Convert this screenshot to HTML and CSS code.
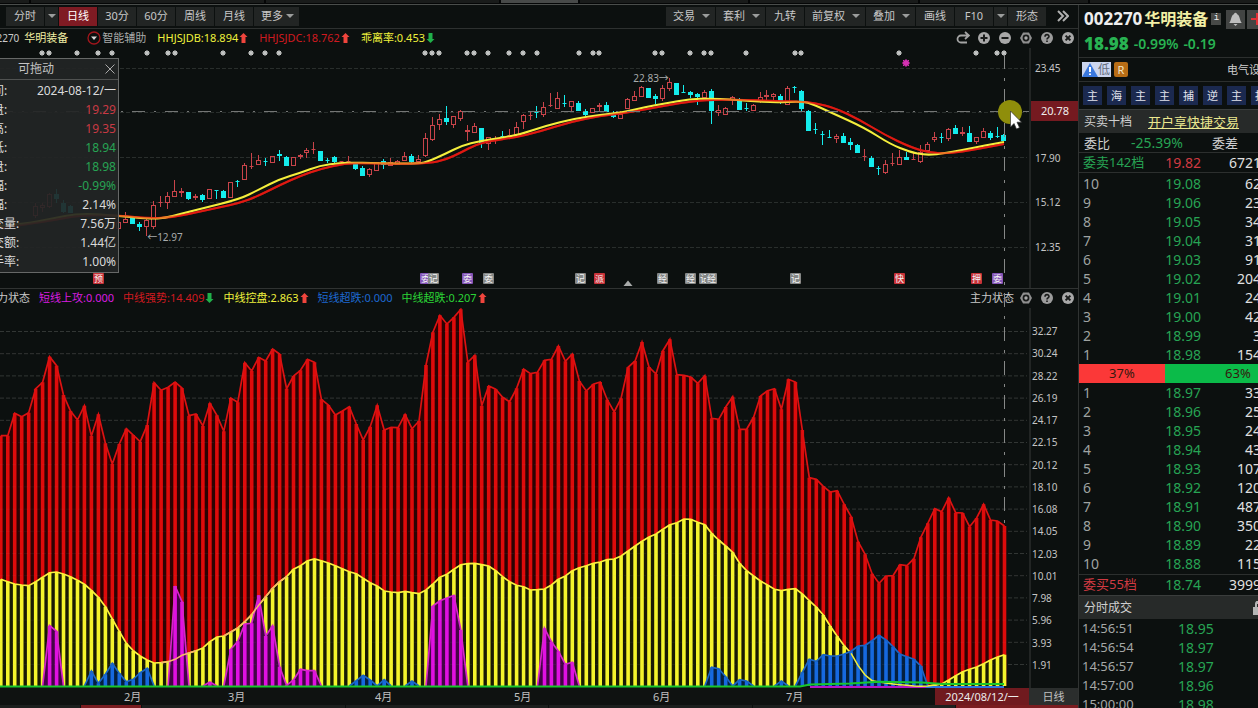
FILE: index.html
```html
<!DOCTYPE html>
<html lang="zh-CN">
<head>
<meta charset="utf-8">
<title>华明装备 002270 日线</title>
<link rel="stylesheet" href="styles.css">
</head>
<body>
<svg class="defs" width="0" height="0" aria-hidden="true">
  <symbol id="up" viewBox="0 0 8 10"><path d="M4 0 8 4H6V10H2V4H0Z"/></symbol>
  <symbol id="down" viewBox="0 0 8 10"><path d="M4 10 8 6H6V0H2V6H0Z"/></symbol>
  <symbol id="redo" viewBox="0 0 14 14"><path d="M9 1 13 4.500 9 8M12 4.500H5A3.200 3.200 0 0 0 5 11.500H11" fill="none" stroke="#a4a4a4" stroke-width="1.800"/></symbol>
  <symbol id="plus" viewBox="0 0 14 14"><circle cx="7" cy="7" r="6" fill="#a8a8a8"/><path d="M3.500 7H10.500M7 3.500V10.500" stroke="#181a19" stroke-width="2"/></symbol>
  <symbol id="minus" viewBox="0 0 14 14"><circle cx="7" cy="7" r="6" fill="#a8a8a8"/><path d="M3.500 7H10.500" stroke="#181a19" stroke-width="2"/></symbol>
  <symbol id="gear" viewBox="0 0 14 14"><path d="M4 1.500H10L13 7 10 12.500H4L1 7Z" fill="#8f8f8f"/><circle cx="7" cy="7" r="3.400" fill="#181a19"/><circle cx="7" cy="7" r="1.700" fill="#a8a8a8"/></symbol>
  <symbol id="help" viewBox="0 0 14 14"><circle cx="7" cy="7" r="6" fill="#9c9c9c"/><path d="M5 5.700C5 3 9 3 9 5.500 9 7 7 6.800 7 8.600M7 9.600V11" fill="none" stroke="#181a19" stroke-width="1.600"/></symbol>
  <symbol id="close" viewBox="0 0 14 14"><circle cx="7" cy="7" r="6" fill="#a8a8a8"/><path d="M4.600 4.600 9.400 9.400M9.400 4.600 4.600 9.400" stroke="#181a19" stroke-width="2"/></symbol>
</svg>
<div class="app">
  <div class="tabstrip"><i></i><i></i><i></i><i class="on"></i><i></i><i></i><i></i><i></i></div>
  <div class="body">
    <main class="main">
      <nav class="toolbar">
        <div class="group">
          <button class="btn">分时</button><button class="btn drop" aria-label="分时选项"><span class="caret"></span></button>
          <button class="btn active">日线</button><button class="btn">30分</button><button class="btn">60分</button><button class="btn">周线</button><button class="btn">月线</button><button class="btn more">更多<span class="caret"></span></button>
        </div>
        <div class="group">
          <button class="btn wide">交易<span class="caret"></span></button><button class="btn wide">套利<span class="caret"></span></button><button class="btn">九转</button><button class="btn wide">前复权<span class="caret"></span></button><button class="btn wide">叠加<span class="caret"></span></button><button class="btn">画线</button><button class="btn">F10</button><button class="btn drop" aria-label="F10选项"><span class="caret"></span></button><button class="btn">形态</button>
          <button class="expand" aria-label="展开"><svg width="12" height="12" viewBox="0 0 12 12"><path d="M1 1 6 6 1 11M6 1 11 6 6 11" fill="none" stroke="#b0b0b0" stroke-width="2"/></svg></button>
        </div>
      </nav>
      <div class="charts">
        <div class="legend first">
          <div class="items">
            <span class="stock"><span class="code">002270</span><span class="pale">华明装备</span></span>
            <span class="assist"><svg width="14" height="14" viewBox="0 0 14 14"><circle cx="7" cy="7" r="6" fill="none" stroke="#a3161c" stroke-width="1.300"/><path d="M4 5.500H10L7 9Z" fill="#d8d8d8"/></svg>智能辅助</span>
            <span class="yellow">HHJSJDB:18.894<svg class="arrow up"><use href="#up"/></svg></span>
            <span class="red">HHJSJDC:18.762<svg class="arrow up"><use href="#up"/></svg></span>
            <span class="yellow">乖离率:0.453<svg class="arrow down"><use href="#down"/></svg></span>
          </div>
          <div class="tools">
            <button aria-label="恢复"><svg><use href="#redo"/></svg></button><button aria-label="放大"><svg><use href="#plus"/></svg></button><button aria-label="缩小"><svg><use href="#minus"/></svg></button><button aria-label="设置"><svg><use href="#gear"/></svg></button><button aria-label="帮助"><svg><use href="#help"/></svg></button><button aria-label="关闭"><svg><use href="#close"/></svg></button>
          </div>
        </div>
        <section class="pane price">
          <div class="plot"><svg id="price" viewBox="0 48 1029 240" preserveAspectRatio="none"></svg>
            <div id="marks"></div>
            <span class="note high">22.83→</span><span class="note low">←12.97</span>
          </div>
          <div class="axis"><span>23.45</span><span class="current">20.78</span><span>17.90</span><span>15.12</span><span>12.35</span></div>
        </section>
        <div class="legend second">
          <div class="items">
            <span>主力状态</span>
            <span class="magenta">短线上攻:0.000</span>
            <span class="red">中线强势:14.409<svg class="arrow down"><use href="#down"/></svg></span>
            <span class="yellow">中线控盘:2.863<svg class="arrow up"><use href="#up"/></svg></span>
            <span class="blue">短线超跌:0.000</span>
            <span class="green">中线超跌:0.207<svg class="arrow up"><use href="#up"/></svg></span>
          </div>
          <div class="tools"><span>主力状态</span>
            <button aria-label="设置"><svg><use href="#gear"/></svg></button><button aria-label="帮助"><svg><use href="#help"/></svg></button><button aria-label="关闭"><svg><use href="#close"/></svg></button>
          </div>
        </div>
        <section class="pane force">
          <div class="plot"><svg id="force" viewBox="0 308 1029 380" preserveAspectRatio="none"></svg></div>
          <div class="axis"><span>32.27</span><span>30.24</span><span>28.22</span><span>26.19</span><span>24.17</span><span>22.15</span><span>20.12</span><span>18.10</span><span>16.08</span><span>14.05</span><span>12.03</span><span>10.01</span><span>7.98</span><span>5.96</span><span>3.93</span><span>1.91</span></div>
        </section>
        <div class="hair-v"></div><div class="hair-h"></div>
        <div class="pointer"><svg width="32" height="36" viewBox="0 0 32 36"><circle cx="12" cy="13" r="12" fill="#8f8e0b"/><path d="M12.500 12V28L16 24.500 18.500 30 21.500 28.600 19 23.200H23.500Z" fill="#fff" stroke="#333" stroke-width=".7"/></svg></div>
        <div class="tip">
          <div class="tip-head"><span>可拖动</span><button aria-label="关闭"><svg width="10" height="10" viewBox="0 0 10 10"><path d="M.5.5 9.500 9.500M9.500.5.5 9.500" stroke="#aaa" fill="none"/></svg></button></div>
          <dl>
            <dt>时间:</dt><dd>2024-08-12/一</dd>
            <dt>开盘:</dt><dd class="rise">19.29</dd>
            <dt>最高:</dt><dd class="rise">19.35</dd>
            <dt>最低:</dt><dd class="fall">18.94</dd>
            <dt>收盘:</dt><dd class="fall">18.98</dd>
            <dt>涨幅:</dt><dd class="fall">-0.99%</dd>
            <dt>振幅:</dt><dd>2.14%</dd>
            <dt>成交量:</dt><dd>7.56万</dd>
            <dt>成交额:</dt><dd>1.44亿</dd>
            <dt>换手率:</dt><dd>1.00%</dd>
          </dl>
        </div>
      </div>
      <div class="dates">
        <div class="months" id="months"></div>
        <span class="period">日线</span>
      </div>
      <div class="ticker"><i></i><i class="hot"></i><i></i><i></i><i></i><i></i><i class="hot"></i></div>
    </main>
    <aside class="quote"><div class="sheet">
      <h1><span>002270</span><span class="pale">华明装备</span><small>i</small>
        <button aria-label="提醒"><svg width="15" height="15" viewBox="0 0 15 15"><path d="M7.500.8C9 .8 8.600 2 9.500 2.500 12 3.700 11.600 8.500 13.800 11H1.200C3.400 8.500 3 3.700 5.500 2.500 6.400 2 6 .8 7.500.8ZM5.500 12H9.500L7.500 14Z" fill="#bdbdbd"/></svg></button><button class="add" aria-label="加自选"><svg width="12" height="12" viewBox="0 0 12 12"><path d="M0 6H12M6 0V12" stroke="#e02f35" stroke-width="2"/></svg></button></h1>
      <p class="last"><b>18.98</b><span>-0.99%</span><span>-0.19</span></p>
      <div class="badges"><span class="low"><svg width="16" height="14" viewBox="0 0 16 14"><path d="M8 0 16 14H0Z" fill="#3a78dd"/><path d="M8 4V9M8 10.500V12" stroke="#fff" stroke-width="2"/></svg>低</span><span class="r">R</span><span class="sector">电气设备</span></div>
      <div class="chips"><button>主</button><button>海</button><button>主</button><button>主</button><button>捕</button><button>逆</button><button>主</button><button>捕</button></div>
      <div class="bar"><span>买卖十档</span><a href="#">开户享快捷交易</a></div>
      <div class="ratio"><span>委比</span><b>-25.39%</b><span>委差</span></div>
      <table class="book total"><tr><th class="fall">委卖142档</th><td class="rise">19.82</td><td>6721</td></tr></table>
      <table class="book" id="asks"></table>
      <div class="balance"><span>37%</span><span>63%</span></div>
      <table class="book" id="bids"></table>
      <table class="book total buy"><tr><th class="rise">委买55档</th><td>18.74</td><td>3999</td></tr></table>
      <div class="bar deals"><span>分时成交</span><svg width="12" height="14" viewBox="0 0 12 14"><path d="M0 6H12V14H0ZM2 6V3A3 3 0 0 1 9 3V6H7V3H4V6Z" fill="#b5b5b5"/></svg></div>
      <table class="trades" id="trades"></table>
    </div></aside>
  </div>
</div>
<script src="chart.js"></script>
</body>
</html>
```
FILE: styles.css
```css
* { box-sizing: border-box; margin: 0; padding: 0; }
body { background: #0c100f; color: #c9c9c9; font: 11px/14px "Noto Sans", "Noto Sans CJK SC", sans-serif; overflow: hidden; }
button { border: 0; background: none; color: inherit; font: inherit; display: flex; align-items: center; justify-content: center; }
.defs { position: absolute; }
.app { height: 100vh; display: flex; flex-direction: column; }
.tabstrip { height: 5px; display: flex; gap: 2px; border-bottom: 1px solid #4a4d4b; flex: none; padding-bottom: 1px; background: #050606; margin-left: -51px; }
.tabstrip i { flex: 0 0 77px; background: #191b1a; }
.tabstrip i:first-child { flex-basis: 80px; }
.tabstrip i:nth-child(2), .tabstrip i:nth-child(3) { flex-basis: 233px; }
.tabstrip i:nth-child(n+5) { flex: 1; }
.tabstrip .on { background: #484a49; }
.body { flex: 1; display: flex; min-height: 0; }
.main { flex: 1; min-width: 0; display: flex; flex-direction: column; }

.toolbar { height: 24px; flex: none; display: flex; justify-content: space-between; align-items: center; padding: 0 0 1px 6px; border-bottom: 1px solid #2e3130; }
.group { display: flex; gap: 1px; align-items: center; }
.btn { min-width: 38px; height: 19px; background: #222524; color: #c8c8c8; padding: 0 7px; gap: 5px; white-space: nowrap; }
.btn.drop { min-width: 13px; width: 13px; padding: 0; }
.btn.wide { padding: 0 5px 0 7px; gap: 7px; }
.btn.more { gap: 3px; padding: 0 5px 0 7px; }
.btn.active { background: #7f1b23; color: #fff; }
.caret { border: 4px solid transparent; border-top-color: #9b9d9c; border-bottom: 0; }
.expand { width: 31px; height: 19px; }

.charts { flex: 1; min-height: 0; display: flex; flex-direction: column; position: relative; overflow: hidden; }
.legend { height: 19px; flex: none; display: flex; justify-content: space-between; align-items: center; white-space: nowrap; padding-bottom: 2px; }
.legend .items { display: flex; align-items: center; gap: 11px; }
.first .items { margin-left: -15px; }
.second .items { margin-left: -14px; gap: 9px; }
.second { height: 20px; border-top: 1px solid #303332; }
.legend .items > span { display: flex; align-items: center; }
.legend .stock { gap: 5px; margin-right: 8px; }
.code { font-size: 10px; }
.assist { color: #a9abaa; gap: 1px; }
.arrow { width: 9px; height: 10px; margin-left: 1px; }
.arrow.up { fill: #f0453d; }
.arrow.down { fill: #20b04a; }
.tools { display: flex; gap: 7px; padding-right: 3px; align-items: center; }
.tools svg { width: 14px; height: 14px; display: block; }
.tools span { margin-right: -2px; }
.pale { color: #f2efa5; }
.yellow { color: #eff03c; }
.red { color: #d01a20; }
.magenta { color: #d81ce0; }
.blue { color: #1d68cf; }
.green { color: #2bd436; }
.rise { color: #c93a44; }
.fall { color: #27a454; }

.pane { display: flex; min-height: 0; }
.pane.price { flex: 240 1 0; }
.pane.force { flex: 380 1 0; }
.plot { flex: 1; min-width: 0; position: relative; }
.plot > svg { display: block; width: 100%; height: 100%; position: absolute; }
.axis { width: 49px; border-left: 2px solid #222524; display: flex; flex-direction: column; justify-content: space-between; font-size: 10px; color: #c4c4c4; }
.price .axis { padding: 13px 0 34px; }
.price .axis span { padding-left: 4px; }
.price .axis .current { background: #751a20; color: #eee; font-size: 11px; line-height: 20px; margin: -5px 0 -1px; padding-left: 10px; }
.force .axis { padding: 16px 0 16px 1px; }
.note { position: absolute; font-size: 10px; color: #a8abab; white-space: nowrap; }
.note.high { right: 35%; top: 9.600%; }
.note.low { left: 14.300%; top: 76%; }
.mark { position: absolute; top: 93.600%; width: 11px; margin: 0 -5px; font-size: 9px; line-height: 11px; text-align: center; color: #f4f4f4; background: #858786; border-radius: 1px; }
.mark.hot { background: #c83238; }
.mark.violet { background: #8455b8; }

.hair-v { position: absolute; top: 26px; bottom: 163px; left: calc((100% - 49px) * .976); width: 1px; background: repeating-linear-gradient(#868887 0 14px, transparent 14px 23px, #868887 23px 26px, transparent 26px 34px); }
.hair-h { position: absolute; top: 82px; left: 0; right: 49px; height: 1px; background: repeating-linear-gradient(90deg, #747675 0 13px, transparent 13px 22px, #747675 22px 24px, transparent 24px 33px); }
.pointer { position: absolute; top: 70px; left: calc((100% - 49px) * .970); }

.tip { position: absolute; left: -26px; top: 29px; width: 145px; height: 215px; background: rgba(35, 37, 37, .92); border: 1px solid #666867; font-size: 12px; }
.tip-head { height: 21px; border-bottom: 1px solid #505251; display: flex; justify-content: space-between; align-items: center; padding: 0 3px 0 43px; color: #c4c4c4; }
.tip dl { display: grid; grid-template-columns: 46px 1fr; grid-auto-rows: 19px; line-height: 19px; padding: 1px 2px 0 5px; color: #dadada; }
.tip dd { text-align: right; }

.dates { height: 17px; flex: none; display: flex; background: #0f1211; color: #c0c0c0; line-height: 17px; }
.months { flex: 1; position: relative; }
.months span { position: absolute; margin-left: -8px; }
.months .today { right: 0; background: #701a1f; width: 94px; text-align: center; margin: 0; color: #ececec; white-space: nowrap; }
.period { width: 49px; background: #2b2e2d; text-align: center; }
.ticker { height: 3px; display: flex; flex: none; gap: 1px; }
.ticker i { flex: 0 0 80px; background: #1c1f1e; }
.ticker i:nth-child(n+3) { flex: 1; }
.ticker i:nth-child(2) { flex-basis: 60px; }
.ticker i:last-child { flex: 0 0 122px; }
.ticker .hot { background: #7a1c20; }

.quote { width: 180px; flex: none; overflow: hidden; border-left: 1px solid #303332; color: #cfcfcf; }
.sheet { width: 232px; }
.quote h1 { height: 28px; display: flex; align-items: center; font-size: 17px; color: #eee; padding: 0 0 0 5px; }
.quote h1 .pale { font-size: 16px; font-weight: 600; margin-left: 2px; }
.quote h1 small { font: 9px/11px "Liberation Mono", monospace; background: #474947; width: 10px; height: 12px; margin: 0 5px 0 3px; text-align: center; }
.quote h1 button { width: 19px; height: 19px; background: #424443; margin-right: 2px; }
.last { height: 25px; display: flex; align-items: center; gap: 5px; padding: 0 0 3px 5px; color: #28b352; font-size: 14px; font-weight: 600; border-bottom: 1px solid #2c2f2e; }
.last b { font-size: 17px; }
.badges { height: 24px; display: flex; align-items: center; padding-left: 3px; border-bottom: 1px solid #2c2f2e; }
.badges .low { width: 29px; height: 15px; background: #cbd5ee; color: #666d7c; display: flex; align-items: center; font-size: 12px; margin-right: 3px; }
.badges .low svg { flex: none; }
.badges .r { width: 14px; height: 15px; line-height: 15px; background: #b86d16; color: #f3e5c4; text-align: center; border-radius: 2px; }
.sector { margin-left: 99px; white-space: nowrap; }
.chips { height: 27px; display: flex; align-items: center; gap: 5px; padding-left: 4px; }
.chips button { width: 19px; height: 19px; flex: none; background: #1b294f; color: #e1e3ec; }
.bar { height: 24px; background: #272a29; display: flex; align-items: center; gap: 16px; font-size: 12px; padding-left: 5px; border-top: 1px solid #3a3d3c; }
.bar a { color: #ebe88f; font-size: 13px; }
.ratio { height: 20px; display: grid; grid-template-columns: 47px 81px 1fr; align-items: center; padding-left: 5px; font-size: 13px; border-bottom: 1px solid #2c2f2e; }
.ratio b { font-weight: 400; font-size: 14px; color: #27a454; }
table { border-spacing: 0; table-layout: fixed; }
.book { width: 182px; font-size: 14px; line-height: 19px; }
.book th { width: 70px; text-align: left; font-weight: 400; padding-left: 4px; color: #9fa3a1; }
.book td { text-align: right; color: #e0e0e0; }
.book td:nth-child(2) { width: 52px; color: #27a454; }
.book .rise { color: #d03a42 !important; }
.book.total th { font-size: 13px; white-space: nowrap; }
.book .fall { color: #27a454; }
.total { border-bottom: 1px solid #2c2f2e; margin-bottom: 1px; width: 182px; }
.total.buy { border-top: 1px solid #2c2f2e; border-bottom: 0; margin: 1px 0; }
.balance { display: grid; grid-template-columns: 37fr 63fr; font-size: 13px; line-height: 19px; text-align: center; color: #35190e; }
.balance span:first-child { background: #fb3838; }
.balance span:last-child { background: #0bbb49; }
.deals { justify-content: flex-start; gap: 121px; }
.trades { font-size: 13px; line-height: 19px; color: #a5a8a7; }
.trades td:first-child { width: 99px; padding-left: 3px; }
.trades td:last-child { font-size: 14px; color: #27a454; }
```
FILE: chart.js
```js
const STEP = 6.97, X0 = 0.8, BASE = 686;
const xAt = i => X0 + STEP * i;
const r = n => Math.round(n * 10) / 10;

// Series values are stored in thirds of a unit below the pane's 300 line.
const level = v => 300 + v / 3;

const strong = [407,407,340,350,338,266,247,170,197,285,333,360,317,408,343,430,492,432,386,405,425,375,248,271,262,246,264,347,342,378,310,346,394,294,307,188,213,172,183,147,162,266,228,211,178,187,298,315,345,333,320,372,420,380,316,390,382,383,343,386,363,195,97,46,72,52,28,187,166,317,258,268,292,305,265,207,221,217,181,178,138,184,162,243,273,253,246,299,336,295,202,183,126,201,222,152,118,224,226,231,250,227,355,358,321,290,388,388,352,288,272,266,328,238,246,390,533,538,559,576,572,613,650,725,763,821,850,828,827,794,797,776,712,670,626,635,593,638,639,680,654,613,660,663,678];
const control = [838,845,852,855,857,845,832,818,816,822,830,841,853,871,892,920,957,994,1030,1052,1068,1080,1089,1088,1085,1078,1066,1059,1052,1044,1025,1011,1008,996,984,965,944,916,890,865,845,830,808,797,782,777,782,789,797,806,815,821,835,848,858,873,876,878,874,878,881,870,852,832,823,808,794,791,790,794,798,812,830,845,856,860,870,869,867,855,838,828,812,803,797,790,786,779,777,768,753,738,724,711,702,688,674,668,657,658,667,674,700,720,738,757,790,812,828,843,855,868,872,868,866,882,902,921,945,978,1009,1037,1060,1097,1125,1142,1146,1149,1152,1154,1156,1158,1159,1158,1155,1152,1140,1127,1115,1108,1101,1091,1080,1071,1064];

// Each run is [index of the zero before it, values].
const attackRuns = [[6,[977,994]],[24,[858,905]],[29,[1146]],[32,[1048,1024,972,970,886,1008,977,1100,1156,1140,1108,1112,1112]],[61,[918,902,894,886,990]],[77,[985,1025,1054,1093,1087]]];
const dipRuns = [[12,[1113,1150,1123,1090,1120,1145,1138,1118,1105]],[50,[1142,1126,1140]],[54,[1139]],[58,[1143]],[101,[1102,1106,1130]],[105,[1139,1143]],[111,[1143]],[114,[1117,1078,1084,1064,1068,1068,1062,1054,1038,1036,1022,1006,1020,1040,1062,1070,1078,1098]]];

const line = pts => "M" + pts.map(p => r(p[0]) + " " + r(p[1])).join("L");
const points = (start, vals) => vals.map((v, k) => [xAt(start + k), level(v)]);
function area(pts, gap, bar, stroke) {
  const first = pts[0][0], last = pts[pts.length - 1][0];
  const bars = pts.map(([x, y]) => `M${r(x - 1.8)} ${BASE}V${r(y)}H${r(x + 1.8)}V${BASE}Z`).join("");
  return `<path d="${line(pts)}L${last} ${BASE}L${first} ${BASE}Z" fill="${gap}"/><path d="${bars}" fill="${bar}"/><path d="${line(pts)}" fill="none" stroke="${stroke}" stroke-width="1.7"/>`;
}
const run = ([start, vals], ...colors) => area([[xAt(start), BASE], ...points(start + 1, vals), [xAt(start + vals.length + 1), BASE]], ...colors);

let grid = "";
for (let k = 0; k < 16; k++) grid += `M0 ${r(331.5 + 22.2 * k)}H1027`;
const gridPath = (d, o) => `<path d="${d}" stroke="#a8b0ac" stroke-opacity="${o}" stroke-dasharray="4 2" fill="none"/>`;
document.getElementById("force").innerHTML =
  gridPath(grid, .19) +
  area(points(0, strong), "#2c0303", "#de0b0b", "#dc1212") +
  area(points(0, control), "#191b04", "#f4f42c", "#fbf23c") +
  attackRuns.map(s => run(s, "#430445", "#e010e2", "#d723cb")).join("") +
  `<path d="${line(points(32, control.slice(32, 42)))}" fill="none" stroke="#f7b76a" stroke-width="1.5"/>` +
  `<path d="${line(points(23, control.slice(23, 29)))}" fill="none" stroke="#f7b76a" stroke-width="1.5"/>` +
  dipRuns.map(s => run(s, "#04203f", "#1669df", "#1a65c5")).join("") +
  `<path d="M810 687H926" stroke="#b516c4" stroke-width="2"/><path d="M926 687H1004" stroke="#2b74e4" stroke-width="2"/>` +
  `<path d="${line(points(122, control.slice(122, 136)))}" fill="none" stroke="#f4f03a" stroke-width="1.5"/>` +
  `<path d="M0 686.500H800L810 684.500 850 683.500 879 681.800 922 682.500 943 684 1004 684" fill="none" stroke="#19c62c" stroke-width="2"/>` +
  gridPath(grid, .07);

// [high, body top, body bottom, low, 1 = rise / 0 = fall]
const candles = {
5:[203,206,216,218,1],6:[203,205,208,212,1],7:[193,194,207,208,1],8:[189,194,199,203,0],9:[200,203,212,213,0],10:[205,206,213,213,0],
17:[222,222,229,229,1],18:[212,219,223,223,1],19:[218,218,224,224,0],20:[222,224,227,231,0],21:[218,220,227,236,1],22:[201,205,227,229,1],23:[196,202,203,207,1],24:[192,196,203,209,1],25:[180,191,197,197,1],26:[188,191,193,197,1],27:[192,192,199,200,0],28:[194,196,198,200,1],29:[194,195,200,202,0],30:[189,189,199,199,1],31:[190,190,191,199,0],32:[190,191,198,198,0],33:[182,182,198,198,1],34:[180,181,182,187,0],35:[163,165,180,180,1],36:[153,166,167,169,1],37:[155,160,165,165,1],38:[158,161,162,166,0],39:[156,156,163,163,1],40:[150,154,156,161,0],41:[156,157,166,166,0],42:[157,157,166,166,1],43:[154,155,157,159,1],44:[148,150,153,158,1],45:[142,149,150,154,1],46:[151,151,161,161,0],47:[158,160,161,163,0],48:[156,157,162,163,0],49:[161,161,162,163,1],50:[156,161,162,162,1],51:[163,164,169,170,0],52:[166,168,176,176,0],53:[168,169,175,177,1],54:[162,162,171,171,1],55:[159,161,165,169,0],56:[158,162,166,166,1],57:[160,161,165,165,1],58:[152,156,161,161,1],59:[154,156,162,163,0],60:[155,159,162,162,1],61:[133,138,156,157,1],62:[117,125,140,141,1],63:[114,119,125,130,1],64:[106,118,122,125,0],65:[116,116,125,128,1],66:[110,111,119,121,1],67:[125,130,132,141,1],68:[123,126,133,133,1],69:[128,128,143,148,0],70:[137,137,144,150,1],71:[136,139,140,144,1],72:[131,136,137,137,0],73:[129,135,136,137,1],74:[122,127,135,135,1],75:[114,115,122,129,1],76:[111,115,116,120,1],77:[106,112,113,118,0],78:[102,107,115,117,1],79:[93,105,106,107,1],80:[92,98,109,109,1],81:[95,103,104,107,0],82:[101,101,107,111,1],83:[101,103,111,111,0],84:[109,111,115,116,0],85:[108,108,113,113,1],86:[103,105,107,112,1],87:[102,105,112,112,0],88:[111,115,117,118,0],89:[111,114,119,119,1],90:[98,99,109,109,1],91:[91,96,101,101,1],92:[86,87,97,97,1],93:[88,88,98,98,0],94:[94,96,99,104,0],95:[85,88,99,101,1],96:[78,82,89,91,1],97:[83,83,95,95,0],98:[85,92,93,93,0],99:[91,92,95,98,0],100:[93,94,97,105,0],101:[90,92,98,98,1],102:[89,91,111,124,0],103:[105,110,113,116,1],104:[107,108,115,115,1],105:[96,97,100,105,1],106:[98,101,110,110,0],107:[103,108,109,111,0],108:[104,105,111,111,1],109:[92,97,102,103,1],110:[90,95,97,100,1],111:[93,94,97,101,1],112:[94,96,101,104,0],113:[86,88,105,105,1],114:[86,87,88,93,0],115:[90,91,109,111,0],116:[110,111,131,131,0],117:[123,129,130,134,0],118:[131,134,135,145,0],119:[130,137,138,138,0],120:[134,136,139,143,1],121:[133,136,143,143,0],122:[138,142,145,150,0],123:[144,145,153,153,0],124:[149,156,157,161,1],125:[156,158,167,167,0],126:[166,168,169,175,0],127:[160,164,173,174,1],128:[153,163,164,166,1],129:[150,157,165,165,1],130:[152,157,160,160,0],131:[153,159,160,160,1],132:[145,152,162,163,1],133:[142,144,151,151,1],134:[132,137,140,142,1],135:[133,137,138,143,0],136:[128,129,139,141,1],137:[125,128,134,134,0],138:[127,132,134,136,1],139:[126,133,142,142,0],140:[137,137,142,144,1],141:[128,131,138,138,1],142:[131,133,138,140,0],143:[127,136,137,138,0],144:[134,135,141,141,0]};
const fast = [[0,226],[24,224],[50,219],[80,213],[120,216],[150,219],[165,218],[180,214],[200,209],[240,199],[258,190],[280,179],[300,173],[320,165.5],[340,163],[355,162.5],[370,163],[390,163.5],[420,163.5],[428,161.5],[445,154],[462,145.5],[480,141],[500,138],[520,134.5],[545,126],[575,118.5],[600,115],[625,112],[645,107],[665,103.5],[690,99],[710,98.5],[730,99.5],[750,101],[775,102.5],[800,101.5],[810,103],[830,112],[865,128],[890,144],[910,152],[925,155],[940,154],[965,149.5],[985,145.5],[1004,142]];
const slow = [[0,228],[50,221],[80,215],[119,215.5],[150,218.5],[175,217],[200,211.5],[240,203],[258,196],[280,185],[300,176],[320,169],[345,163.5],[365,163],[400,164],[430,163],[445,160],[462,152],[475,145],[490,141],[515,137.5],[540,131.5],[570,122],[600,116],[625,113],[650,108.5],[680,103],[705,100],[740,99.5],[775,101],[800,101.5],[815,103],[835,108],[860,120],[885,135],[910,147],[930,153],[950,153.5],[975,149.5],[1004,144]];
function curve(p) {
  let d = `M${p[0]}`;
  for (let i = 1; i < p.length - 1; i++) d += `Q${p[i]} ${(p[i][0] + p[i + 1][0]) / 2} ${(p[i][1] + p[i + 1][1]) / 2}`;
  return d + `L${p[p.length - 1]}`;
}
let out = gridPath("M0 68.500H1027M0 112.500H1027M0 157.500H1027M0 202.500H1027M0 247.500H1027", .19);
for (const [i, [hi, top, bottom, lo, up]] of Object.entries(candles)) {
  const x = Math.round(xAt(+i)) - .5, color = up ? "#c9444a" : "#14ecec";
  const wick = `M${x} ${hi}V${top}M${x} ${bottom}V${lo}`;
  const thin = bottom - top < 2;
  out += `<path d="${wick}${thin ? `M${x - 2} ${top + .5}H${x + 2}M${x} ${top}V${bottom}` : ""}" stroke="${color}" fill="none"/>`;
  if (!thin) out += up
    ? `<rect x="${x - 2}" y="${top + .5}" width="4" height="${bottom - top - 1}" fill="none" stroke="${color}"/>`
    : `<rect x="${x - 2.5}" y="${top}" width="5" height="${bottom - top}" fill="${color}"/>`;
}
out += `<path d="${curve(slow)}" fill="none" stroke="#e01a12" stroke-width="2"/><path d="${curve(fast)}" fill="none" stroke="#f5ee3c" stroke-width="2"/><path d="${curve(slow)}" fill="none" stroke="#e01a12" stroke-width="2" stroke-opacity=".55"/>`;
function burst(x, y, size, color) {
  return `<circle cx="${x}" cy="${y}" r="${size - 1}" fill="${color}"/><path d="M${x - size} ${y}H${x + size}M${x} ${y - size}V${y + size}M${x - size + 1} ${y - size + 1}L${x + size - 1} ${y + size - 1}M${x + size - 1} ${y - size + 1}L${x - size + 1} ${y + size - 1}" stroke="${color}"/>`;
}
for (const x of [42,49,77,98,112,147,168,175,223,251,265,279,425,432,439,467,474,488,509,523,537,579,593,599,655,662,690,704,711,746,795,801,899,976,997,1004]) out += burst(x, 53, 3, "#c4c6c5");
out += burst(906, 63, 4, "#d431b2") + `<path d="M623.500 286L628 280.500 632.500 286Z" fill="#a9abaa"/>`;
document.getElementById("price").innerHTML = out;

const marks = [[98,"预","hot"],[425,"委","violet"],[433,"记",""],[467,"委","violet"],[488,"委",""],[580,"记",""],[599,"派","hot"],[662,"经",""],[690,"经",""],[704,"记",""],[711,"经",""],[795,"记",""],[899,"快","hot"],[976,"押","hot"],[997,"委","violet"]];
document.getElementById("marks").innerHTML = marks.map(([x, t, c]) => `<span class="mark ${c}" style="left:${r(x / 1029 * 1000) / 10}%">${t}</span>`).join("");
document.getElementById("months").innerHTML = [[132,"2月"],[236,"3月"],[383,"4月"],[522,"5月"],[661,"6月"],[794,"7月"]].map(([x, t]) => `<span style="left:${r(x / 1029 * 1000) / 10}%">${t}</span>`).join("") + `<span class="today">2024/08/12/一</span>`;

const rows = (id, list) => { document.getElementById(id).innerHTML = list.map(([a, b, c]) => `<tr><th>${a}</th><td>${b}</td><td>${c}</td></tr>`).join(""); };
rows("asks", [[10,"19.08",62],[9,"19.06",23],[8,"19.05",34],[7,"19.04",31],[6,"19.03",91],[5,"19.02",204],[4,"19.01",24],[3,"19.00",42],[2,"18.99",3],[1,"18.98",154]]);
rows("bids", [[1,"18.97",33],[2,"18.96",25],[3,"18.95",24],[4,"18.94",43],[5,"18.93",107],[6,"18.92",120],[7,"18.91",487],[8,"18.90",350],[9,"18.89",22],[10,"18.88",115]]);
document.getElementById("trades").innerHTML = [["14:56:51","18.95"],["14:56:54","18.97"],["14:56:57","18.97"],["14:57:00","18.96"],["15:00:00","18.98"]].map(([t, p]) => `<tr><td>${t}</td><td>${p}</td></tr>`).join("");
```
